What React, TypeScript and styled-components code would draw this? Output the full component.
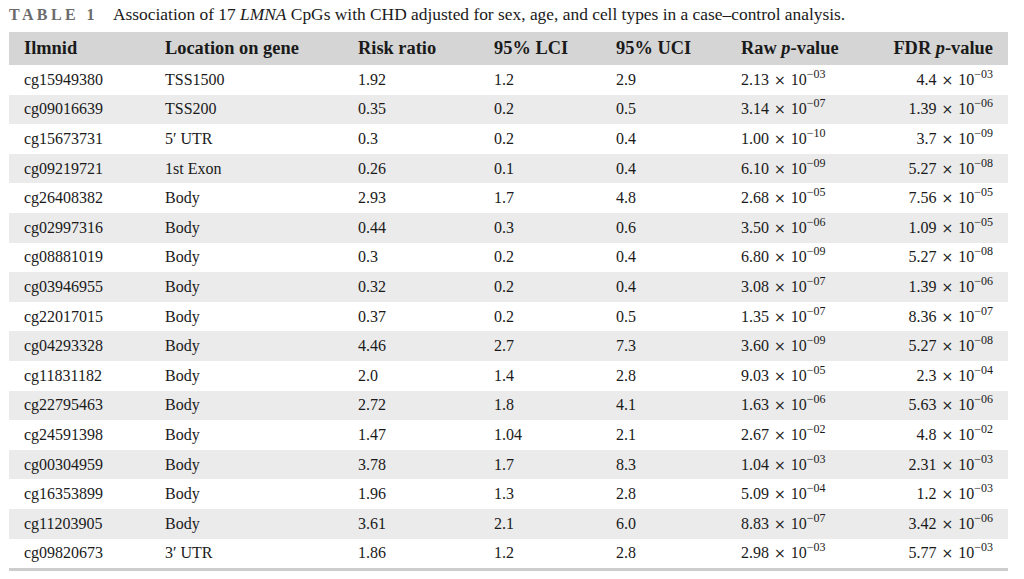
import styled, { createGlobalStyle } from "styled-components";

const GlobalStyle = createGlobalStyle`
  html, body {
    margin: 0;
    padding: 0;
    background: #fff;
  }
  body {
    font-family: "Liberation Serif", "DejaVu Serif", serif;
    color: #1a1a1a;
  }
`;

const Page = styled.div`
  width: 1024px;
  height: 579px;
  padding: 0 16px 0 9px;
  box-sizing: border-box;
  overflow: hidden;
`;

const Caption = styled.div`
  display: flex;
  align-items: baseline;
  height: 32px;
  padding-top: 4px;
  box-sizing: border-box;
  font-size: 17.4px;
  color: #1a1a1a;
`;

const Label = styled.span`
  font-weight: bold;
  color: #6b6b6b;
  letter-spacing: 3.4px;
  font-size: 16px;
  width: 104px;
`;

const Table = styled.div`
  border-bottom: 3px solid #cdcdcd;
`;

const Row = styled.div<{ $head?: boolean; $shade?: boolean }>`
  display: grid;
  grid-template-columns: 141px 193px 136px 122px 125px 1fr;
  align-items: center;
  height: ${(p) => (p.$head ? "33px" : "29.6px")};
  padding: 0 15px;
  font-size: ${(p) => (p.$head ? "18.4px" : "16px")};
  font-weight: ${(p) => (p.$head ? "bold" : "normal")};
  background: ${(p) =>
    p.$head ? "#d5d5d5" : p.$shade ? "#ebebeb" : "#ffffff"};
`;

const Cell = styled.div<{ $right?: boolean }>`
  white-space: nowrap;
  text-align: ${(p) => (p.$right ? "right" : "left")};
`;

const Exp = styled.sup`
  font-size: 12px;
  vertical-align: 0;
  position: relative;
  top: -7px;
`;

const Times = styled.span`
  margin: 0 5px;
  font-family: "DejaVu Sans", sans-serif;
  font-size: 14px;
`;

function Sci({ v }: { v: string }) {
  const [m, e] = v.split("e");
  return (
    <>
      {m}
      <Times>×</Times>10<Exp>−{e}</Exp>
    </>
  );
}

const rows: [string, string, string, string, string, string, string][] = [
  ["cg15949380", "TSS1500", "1.92", "1.2", "2.9", "2.13e03", "4.4e03"],
  ["cg09016639", "TSS200", "0.35", "0.2", "0.5", "3.14e07", "1.39e06"],
  ["cg15673731", "5′ UTR", "0.3", "0.2", "0.4", "1.00e10", "3.7e09"],
  ["cg09219721", "1st Exon", "0.26", "0.1", "0.4", "6.10e09", "5.27e08"],
  ["cg26408382", "Body", "2.93", "1.7", "4.8", "2.68e05", "7.56e05"],
  ["cg02997316", "Body", "0.44", "0.3", "0.6", "3.50e06", "1.09e05"],
  ["cg08881019", "Body", "0.3", "0.2", "0.4", "6.80e09", "5.27e08"],
  ["cg03946955", "Body", "0.32", "0.2", "0.4", "3.08e07", "1.39e06"],
  ["cg22017015", "Body", "0.37", "0.2", "0.5", "1.35e07", "8.36e07"],
  ["cg04293328", "Body", "4.46", "2.7", "7.3", "3.60e09", "5.27e08"],
  ["cg11831182", "Body", "2.0", "1.4", "2.8", "9.03e05", "2.3e04"],
  ["cg22795463", "Body", "2.72", "1.8", "4.1", "1.63e06", "5.63e06"],
  ["cg24591398", "Body", "1.47", "1.04", "2.1", "2.67e02", "4.8e02"],
  ["cg00304959", "Body", "3.78", "1.7", "8.3", "1.04e03", "2.31e03"],
  ["cg16353899", "Body", "1.96", "1.3", "2.8", "5.09e04", "1.2e03"],
  ["cg11203905", "Body", "3.61", "2.1", "6.0", "8.83e07", "3.42e06"],
  ["cg09820673", "3′ UTR", "1.86", "1.2", "2.8", "2.98e03", "5.77e03"],
];

export default function App() {
  return (
    <Page>
      <GlobalStyle />
      <Caption>
        <Label>TABLE 1</Label>
        <span>
          Association of 17 <i>LMNA</i> CpGs with CHD adjusted for sex, age, and
          cell types in a case–control analysis.
        </span>
      </Caption>
      <Table>
        <Row $head>
          <Cell>Ilmnid</Cell>
          <Cell>Location on gene</Cell>
          <Cell>Risk ratio</Cell>
          <Cell>95% LCI</Cell>
          <Cell>95% UCI</Cell>
          <Cell style={{ display: "flex", justifyContent: "space-between" }}>
            <span>
              Raw <i>p</i>-value
            </span>
            <span>
              FDR <i>p</i>-value
            </span>
          </Cell>
        </Row>
        {rows.map((r, i) => (
          <Row key={r[0]} $shade={i % 2 === 1}>
            <Cell>{r[0]}</Cell>
            <Cell>{r[1]}</Cell>
            <Cell>{r[2]}</Cell>
            <Cell>{r[3]}</Cell>
            <Cell>{r[4]}</Cell>
            <Cell style={{ display: "flex", justifyContent: "space-between" }}>
              <span>
                <Sci v={r[5]} />
              </span>
              <span>
                <Sci v={r[6]} />
              </span>
            </Cell>
          </Row>
        ))}
      </Table>
    </Page>
  );
}
